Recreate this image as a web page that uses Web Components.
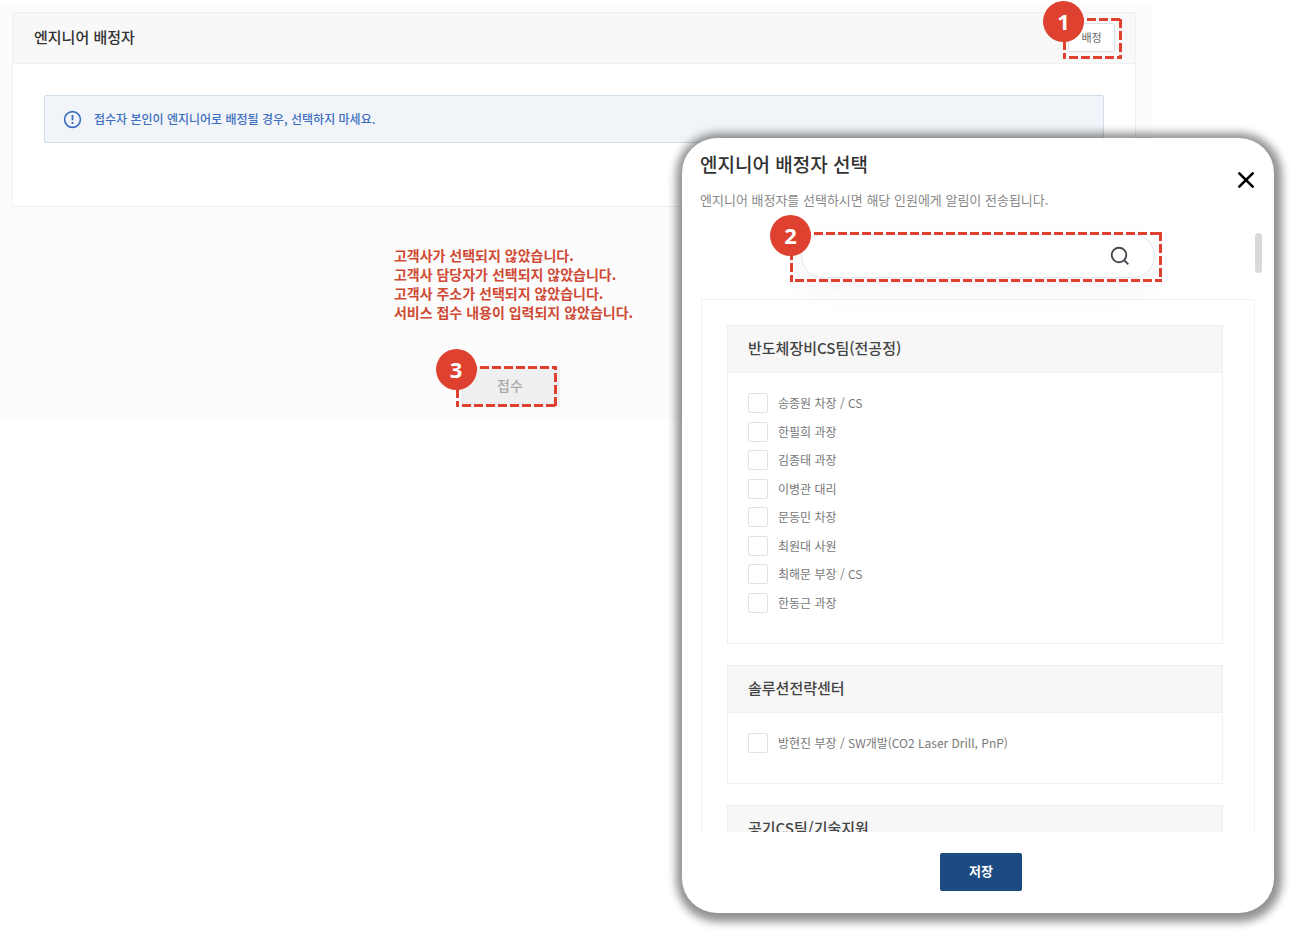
<!DOCTYPE html>
<html lang="ko">
<head>
<meta charset="utf-8">
<meta name="viewport" content="width=device-width, initial-scale=1">
<title>엔지니어 배정자</title>
<style>
  body {
    margin: 0;
    background: #fff;
    color: #333;
    font-family: "Noto Sans CJK KR", "Noto Sans", sans-serif;
    font-size: 12px;
  }
  .assign-mark { --ring-inset: -5px -7px -7px -5px; }
  .submit-mark { --ring-inset: 0 3px 0 -5px; }
</style>
</head>
<body>
<request-page>
  <assignee-card heading="엔지니어 배정자">
    <callout-mark class="assign-mark" slot="action" number="1"><ui-button kind="outline">배정</ui-button></callout-mark>
    <info-notice>접수자 본인이 엔지니어로 배정될 경우, 선택하지 마세요.</info-notice>
  </assignee-card>
  <submit-area>
    <p slot="message">고객사가 선택되지 않았습니다.</p>
    <p slot="message">고객사 담당자가 선택되지 않았습니다.</p>
    <p slot="message">고객사 주소가 선택되지 않았습니다.</p>
    <p slot="message">서비스 접수 내용이 입력되지 않았습니다.</p>
    <callout-mark class="submit-mark" number="3"><ui-button kind="submit" disabled>접수</ui-button></callout-mark>
  </submit-area>
</request-page>

<engineer-dialog heading="엔지니어 배정자 선택" note="엔지니어 배정자를 선택하시면 해당 인원에게 알림이 전송됩니다.">
  <team-card heading="반도체장비CS팀(전공정)">
    <person-option>송종원 차장 / CS</person-option>
    <person-option>한필희 과장</person-option>
    <person-option>김종태 과장</person-option>
    <person-option>이병관 대리</person-option>
    <person-option>문동민 차장</person-option>
    <person-option>최원대 사원</person-option>
    <person-option>최해문 부장 / CS</person-option>
    <person-option>한동근 과장</person-option>
  </team-card>
  <team-card heading="솔루션전략센터">
    <person-option>방현진 부장 / SW개발(CO2 Laser Drill, PnP)</person-option>
  </team-card>
  <team-card heading="공기CS팀/기술지원"></team-card>
  <ui-button slot="footer" kind="primary">저장</ui-button>
</engineer-dialog>

<script>
  class BaseElement extends HTMLElement {
    connectedCallback() {
      if (this.shadowRoot) return;
      const root = this.attachShadow({ mode: 'open' });
      root.innerHTML = '<style>*{box-sizing:border-box}:host{box-sizing:border-box}</style>' + this.render();
    }
    attr(name) { return this.getAttribute(name) || ''; }
  }

  customElements.define('request-page', class extends BaseElement {
    render() {
      return `<style>
        :host { display: block; padding: 4px 139px 0 0; }
        main { background: #fcfcfc; padding: 8px 16px 12px 12px; }
      </style><main><slot></slot></main>`;
    }
  });

  customElements.define('assignee-card', class extends BaseElement {
    render() {
      return `<style>
        :host { display: block; background: #fff; border: 1px solid #f0f0f0; }
        header { display: flex; align-items: center; justify-content: space-between; height: 51px;
          padding: 0 20px 1px 21px; background: #f8f8f8; border-bottom: 1px solid #f0f0f0; }
        h2 { margin: 0; padding-bottom: 1px; font-size: 15px; line-height: 24px; font-weight: 500; color: #333; }
        .body { padding: 31px 31px 63px; }
      </style>
      <header><h2>${this.attr('heading')}</h2><slot name="action"></slot></header>
      <div class="body"><slot></slot></div>`;
    }
  });

  customElements.define('info-notice', class extends BaseElement {
    render() {
      return `<style>
        :host { display: flex; align-items: center; gap: 12px; height: 48px; padding: 0 18px;
          background: #f1f5f9; border: 1px solid #cfdde8; border-radius: 2px;
          color: #3f6fc0; font-size: 12px; line-height: 20px; font-weight: 500; }
        svg { width: 19px; height: 19px; flex: none; }
      </style>
      <svg viewBox="0 0 19 19" fill="none" stroke="#3f6fc0" aria-hidden="true">
        <circle cx="9.500" cy="9.500" r="7.900" stroke-width="1.600"/>
        <path d="M9.500 5v5.300" stroke-width="1.800"/><path d="M9.500 12v2" stroke-width="1.900"/>
      </svg><span><slot></slot></span>`;
    }
  });

  customElements.define('submit-area', class extends BaseElement {
    render() {
      return `<style>
        :host { display: flex; flex-direction: column; align-items: center; gap: 44px; padding: 39px 128px 0 0; }
        .messages { padding-left: 7px; color: #cf4a35; font-size: 14px; line-height: 19px; font-weight: 700; }
        ::slotted(p) { margin: 0; }
      </style>
      <div class="messages" role="alert"><slot name="message"></slot></div><slot></slot>`;
    }
  });

  customElements.define('ui-button', class extends BaseElement {
    render() {
      return `<style>
        :host { display: block; }
        button { display: block; margin: 0; padding: 0; border: 0; border-radius: 2px; font: inherit; }
        .outline { width: 47px; height: 29px; background: #fff; border: 1px solid #dfe1e6; color: #666; font-size: 11px; line-height: 16px; padding-bottom: 2px; }
        .submit { width: 99px; height: 41px; background: #efefef; color: #aaa; font-size: 14px; line-height: 20px; font-weight: 500; padding-bottom: 4px; }
        .primary { width: 82px; height: 38px; background: #1c4b82; color: #fff; font-size: 13px; line-height: 20px; font-weight: 700; padding-bottom: 2px; }
      </style>
      <button type="button" class="${this.attr('kind')}" ${this.hasAttribute('disabled') ? 'disabled' : ''}><slot></slot></button>`;
    }
  });

  /* Numbered guide marker: dashed ring around its content plus a round badge on the corner. */
  customElements.define('callout-mark', class extends BaseElement {
    render() {
      return `<style>
        :host { display: block; position: relative; }
        .ring { position: absolute; inset: var(--ring-inset, 0); pointer-events: none; }
        svg { display: block; width: 100%; height: 100%; }
        rect { fill: none; stroke: #de412f; stroke-width: 6; stroke-dasharray: 9 3; }
        .badge { position: absolute; left: -20px; top: -17px; display: grid; place-items: center;
          width: 41px; height: 41px; padding-bottom: 2px; border-radius: 50%; background: #de412f; color: #fff;
          font-family: "Open Sans", "Noto Sans", sans-serif; font-size: 22px; line-height: 28px; font-weight: 700; }
      </style>
      <slot></slot>
      <div class="ring"><svg aria-hidden="true"><rect width="100%" height="100%"/></svg>
      <span class="badge">${this.attr('number')}</span></div>`;
    }
  });

  customElements.define('search-box', class extends BaseElement {
    render() {
      return `<style>
        :host { display: flex; align-items: center; height: 44px; padding: 0 24px 0 20px; background: #fff;
          border: 1px solid #e3e6ec; border-radius: 22px; box-shadow: 0 10px 30px rgba(0,0,0,.05); }
        input { flex: 1; min-width: 0; height: 30px; padding: 0; border: 0; outline: 0; background: none; font: inherit; }
        button { display: block; padding: 0; border: 0; background: none; }
        svg { display: block; width: 20px; height: 20px; }
      </style>
      <input type="text" aria-label="엔지니어 검색">
      <button type="button" aria-label="검색"><svg viewBox="0 0 20 20" fill="none" stroke="#45484d" stroke-width="1.900">
        <circle cx="9" cy="9" r="7.300"/><path d="M14 14l4.300 4.300"/></svg></button>`;
    }
  });

  customElements.define('engineer-dialog', class extends BaseElement {
    render() {
      return `<style>
        :host { position: absolute; top: 138px; right: 17px; width: 592px; max-width: calc(100% - 34px);
          height: calc(100vh - 157px); min-height: 400px; display: flex; flex-direction: column;
          background: #fff; border-radius: 35px; box-shadow: 1px 2px 8px 7px rgba(0,0,0,.43); }
        header { display: flex; justify-content: space-between; align-items: center; padding: 11px 19px 0 18px; height: 72px; flex: none; }
        h1 { margin: 0 0 12px; font-size: 19px; line-height: 28px; font-weight: 500; color: #333; }
        header p { margin: 0; font-size: 13px; line-height: 20px; color: #888; }
        .close { display: block; padding: 0; border: 0; background: none; }
        .close svg { display: block; width: 18px; height: 18px; }
        .scroll { position: relative; flex: 1; min-height: 0; overflow: hidden; padding: 24px 19px 0; }
        .thumb { position: absolute; right: 12px; top: 23px; width: 7px; height: 40px; border-radius: 4px; background: #d9d9d9; }
        .search { width: 354px; max-width: 80%; margin: 0 auto; --ring-inset: -2px -7px -4px -11px; }
        .list { display: flex; flex-direction: column; gap: 21px; margin-top: 21px; padding: 25px 31px 25px 25px; border: 1px solid #f2f2f2; }
        footer { display: flex; justify-content: center; padding: 21px 0 22px 6px; flex: none; }
      </style>
      <header><div><h1>${this.attr('heading')}</h1><p>${this.attr('note')}</p></div>
        <button type="button" class="close" aria-label="닫기"><svg viewBox="0 0 18 18" fill="none" stroke="#000" stroke-width="2.600" stroke-linecap="round"><path d="M2.300 2.300l13.400 13.400M15.700 2.300L2.300 15.700"/></svg></button></header>
      <div class="scroll">
        <callout-mark class="search" number="2"><search-box></search-box></callout-mark>
        <div class="list"><slot></slot></div>
        <div class="thumb"></div>
      </div>
      <footer><slot name="footer"></slot></footer>`;
    }
  });

  customElements.define('team-card', class extends BaseElement {
    render() {
      return `<style>
        :host { display: block; border: 1px solid #f0f0f0; }
        h2 { margin: 0; padding: 10px 20px 12px; font-size: 15px; line-height: 24px; font-weight: 500; color: #444;
          background: #f7f7f7; border-bottom: 1px solid #f0f0f0; }
        .people { padding: 20px 20px 30px; }
        ::slotted(person-option:not(:first-child)) { margin-top: 9px; }
        ::slotted(person-option:nth-child(2n+3)) { margin-top: 8px; }
      </style>
      <h2>${this.attr('heading')}</h2><div class="people"><slot></slot></div>`;
    }
  });

  customElements.define('person-option', class extends BaseElement {
    render() {
      return `<style>
        :host { display: block; }
        label { display: flex; align-items: center; gap: 10px; font-size: 12px; line-height: 20px; color: #777; }
        input { appearance: none; flex: none; margin: 0; width: 20px; height: 20px; border: 1px solid #dfe2e8; border-radius: 2px; background: #fff; }
      </style>
      <label><input type="checkbox"><span><slot></slot></span></label>`;
    }
  });
</script>
</body>
</html>
